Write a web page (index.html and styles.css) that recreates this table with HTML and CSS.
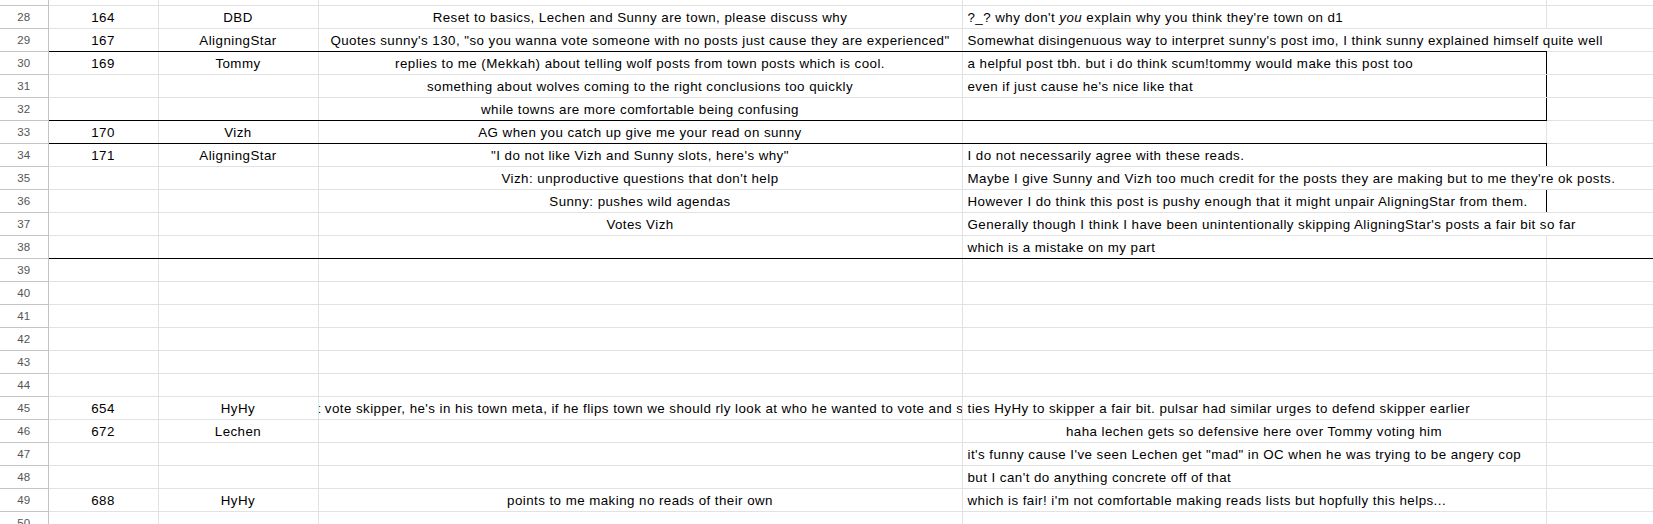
FILE: index.html
```html
<!DOCTYPE html>
<html lang="en">
<head>
    <meta charset="UTF-8">
    <title>Reads - Sheet1</title>
    <link rel="stylesheet" href="styles.css">
</head>
<body>
    <table class="sheet">
        <colgroup>
            <col class="w-num">
            <col class="w-post">
            <col class="w-who">
            <col class="w-said">
            <col class="w-note">
            <col class="w-rest">
        </colgroup>
        <tbody>
            <tr><td class="n"></td><td></td><td></td><td></td><td></td><td></td></tr>
            <tr>
                <td class="n">28</td><td class="c">164</td><td class="c">DBD</td>
                <td class="c">Reset to basics, Lechen and Sunny are town, please discuss why</td>
                <td class="l">?_? why don't <i>you</i> explain why you think they're town on d1</td><td></td>
            </tr>
            <tr>
                <td class="n">29</td><td class="c bb">167</td><td class="c bb">AligningStar</td>
                <td class="c bb">Quotes sunny's 130, "so you wanna vote someone with no posts just cause they are experienced"</td>
                <td class="l bb spill">Somewhat disingenuous way to interpret sunny's post imo, I think sunny explained himself quite well</td><td></td>
            </tr>
            <tr>
                <td class="n">30</td><td class="c">169</td><td class="c">Tommy</td>
                <td class="c">replies to me (Mekkah) about telling wolf posts from town posts which is cool.</td>
                <td class="l br">a helpful post tbh. but i do think scum!tommy would make this post too</td><td></td>
            </tr>
            <tr>
                <td class="n">31</td><td></td><td></td>
                <td class="c">something about wolves coming to the right conclusions too quickly</td>
                <td class="l br">even if just cause he's nice like that</td><td></td>
            </tr>
            <tr>
                <td class="n">32</td><td class="bb"></td><td class="bb"></td>
                <td class="c bb">while towns are more comfortable being confusing</td>
                <td class="l br bb"></td><td></td>
            </tr>
            <tr>
                <td class="n">33</td><td class="c bb">170</td><td class="c bb">Vizh</td>
                <td class="c bb">AG when you catch up give me your read on sunny</td>
                <td class="l bb"></td><td></td>
            </tr>
            <tr>
                <td class="n">34</td><td class="c">171</td><td class="c">AligningStar</td>
                <td class="c">"I do not like Vizh and Sunny slots, here's why"</td>
                <td class="l br">I do not necessarily agree with these reads.</td><td></td>
            </tr>
            <tr>
                <td class="n">35</td><td></td><td></td>
                <td class="c">Vizh: unproductive questions that don't help</td>
                <td class="l spill">Maybe I give Sunny and Vizh too much credit for the posts they are making but to me they're ok posts.</td><td></td>
            </tr>
            <tr>
                <td class="n">36</td><td></td><td></td>
                <td class="c">Sunny: pushes wild agendas</td>
                <td class="l br">However I do think this post is pushy enough that it might unpair AligningStar from them.</td><td></td>
            </tr>
            <tr>
                <td class="n">37</td><td></td><td></td>
                <td class="c">Votes Vizh</td>
                <td class="l spill">Generally though I think I have been unintentionally skipping AligningStar's posts a fair bit so far</td><td></td>
            </tr>
            <tr>
                <td class="n">38</td><td class="bb"></td><td class="bb"></td>
                <td class="c bb"></td>
                <td class="l bb">which is a mistake on my part</td><td class="bb"></td>
            </tr>
            <tr><td class="n">39</td><td></td><td></td><td></td><td></td><td></td></tr>
            <tr><td class="n">40</td><td></td><td></td><td></td><td></td><td></td></tr>
            <tr><td class="n">41</td><td></td><td></td><td></td><td></td><td></td></tr>
            <tr><td class="n">42</td><td></td><td></td><td></td><td></td><td></td></tr>
            <tr><td class="n">43</td><td></td><td></td><td></td><td></td><td></td></tr>
            <tr><td class="n">44</td><td></td><td></td><td></td><td></td><td></td></tr>
            <tr>
                <td class="n">45</td><td class="c">654</td><td class="c">HyHy</td>
                <td class="clip"><div class="clip-box"><span class="clip-text">t vote skipper, he's in his town meta, if he flips town we should rly look at who he wanted to vote and scumread them</span></div></td>
                <td class="l">ties HyHy to skipper a fair bit. pulsar had similar urges to defend skipper earlier</td><td></td>
            </tr>
            <tr>
                <td class="n">46</td><td class="c">672</td><td class="c">Lechen</td>
                <td></td>
                <td class="c">haha lechen gets so defensive here over Tommy voting him</td><td></td>
            </tr>
            <tr>
                <td class="n">47</td><td></td><td></td><td></td>
                <td class="l">it's funny cause I've seen Lechen get "mad" in OC when he was trying to be angery cop</td><td></td>
            </tr>
            <tr>
                <td class="n">48</td><td></td><td></td><td></td>
                <td class="l">but I can't do anything concrete off of that</td><td></td>
            </tr>
            <tr>
                <td class="n">49</td><td class="c">688</td><td class="c">HyHy</td>
                <td class="c">points to me making no reads of their own</td>
                <td class="l">which is fair! i'm not comfortable making reads lists but hopfully this helps...</td><td></td>
            </tr>
            <tr><td class="n">50</td><td></td><td></td><td></td><td></td><td></td></tr>
        </tbody>
    </table>
</body>
</html>
```

FILE: styles.css
```css
* {
    box-sizing: border-box;
    margin: 0;
    padding: 0;
}

body {
    background: #fff;
    overflow: hidden;
    font-family: 'Liberation Sans', Arial, sans-serif;
}

.sheet {
    border-collapse: collapse;
    table-layout: fixed;
    width: 1700px;
    margin-top: -18px;
    font-size: 13.33px;
    letter-spacing: 0.45px;
    color: #000;
}

.w-num { width: 48px; }
.w-post { width: 110px; }
.w-who { width: 160px; }
.w-said { width: 644px; }
.w-note { width: 584px; }
.w-rest { width: 154px; }

.sheet td {
    height: 23px;
    padding: 2px 5px 0;
    border: 1px solid #e2e2e2;
    white-space: nowrap;
    line-height: 20px;
    vertical-align: middle;
}

/* row numbers */
.sheet td.n {
    border-color: #c4c4c4;
    border-left: none;
    color: #555;
    font-size: 11.5px;
    letter-spacing: 0;
    text-align: center;
    padding-top: 0;
}

.c {
    text-align: center;
}

.l {
    text-align: left;
}

.sheet td.bb {
    border-bottom-color: #000;
}

.sheet td.br {
    border-right-color: #000;
}

/* text running into the next cell hides the grid line */
.sheet td.spill {
    border-right-color: #fff;
    overflow: visible;
}

.sheet td.clip {
    padding: 2px 0 0;
}

.clip-box {
    overflow: hidden;
    white-space: nowrap;
}

.clip-text {
    display: inline-block;
    margin-left: -2px;
}
```
